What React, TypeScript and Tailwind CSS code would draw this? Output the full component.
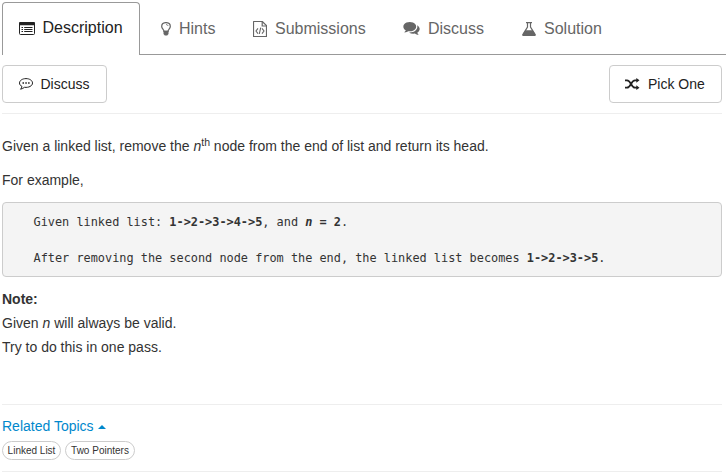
import type { ReactNode } from "react";

function ListIcon() {
  return (
    <svg width="16" height="13" viewBox="0 0 16 13" fill="none" stroke="currentColor">
      <rect x="0.5" y="0.5" width="15" height="12" rx="1" />
      <path d="M0 1.2Q0 0 1.2 0H14.8Q16 0 16 1.2V3.3H0Z" fill="currentColor" stroke="none" />
      <path d="M2.5 5.5H4M5.2 5.5H13.5M2.5 7.5H4M5.2 7.5H13.5M2.5 9.5H4M5.2 9.5H13.5" />
    </svg>
  );
}

function BulbIcon() {
  return (
    <svg width="10" height="14" viewBox="0 0 10 14" fill="none" stroke="currentColor" strokeWidth="1.25">
      <path d="M3 9.3C3 7.4.7 6.6.7 4.4C.7 2.1 2.6.6 5 .6S9.3 2.1 9.3 4.4C9.3 6.6 7 7.4 7 9.3Z" />
      <path d="M5 2.5Q6.7 2.5 7.2 4" strokeWidth=".8" />
      <path d="M2.5 8.8H7.5V12L6.2 13.5H3.8L2.5 12Z" fill="currentColor" stroke="none" />
    </svg>
  );
}

function CodeFileIcon() {
  return (
    <svg width="14" height="16" viewBox="0 0 14 16" fill="none" stroke="currentColor">
      <path d="M1 .5H9.3L13.5 4.7V15.5H.5V1Q.5.5 1 .5Z" strokeWidth="1.2" />
      <path d="M9.2.5V5H13.5" strokeWidth="1.2" />
      <path d="M5 7.3L3 10L5 12.7M9 7.3L11 10L9 12.7M7.7 6.7L6.3 13" strokeWidth="1.1" />
    </svg>
  );
}

function CommentsIcon() {
  return (
    <svg width="17" height="14" viewBox="0 0 1792 1536" fill="currentColor">
      <path d="M1408 640q0 139-94 257t-256.500 186.500-353.500 68.500q-86 0-176-16-124 88-278 128-36 9-86 16h-3q-11 0-20.500-8t-11.500-21q-1-3-1-6.500t.5-6.500 2-6l2.500-5 3.500-5.500 4-5 4.500-5 4-4.500q5-6 23-25t26-29.500 22.500-29 25-38.500 20.500-44q-124-72-195-177t-71-224q0-139 94-257t256.500-186.500 353.500-68.500 353.500 68.500 256.500 186.500 94 257zm384 256q0 120-71 224.500t-195 176.500q10 24 20.500 44t25 38.500 22.500 29 26 29.500 23 25q1 1 4 4.500t4.500 5 4 5 3.500 5.500l2.500 5 2 6 .5 6.500-1 6.500q-3 14-13 22t-22 7q-50-7-86-16-154-40-278-128-90 16-176 16-271 0-472-132 58 4 88 4 161 0 309-45t264-129q125-92 192-212t67-254q0-77-23-152 129 71 204 178t75 230z" transform="translate(0 -128)" />
    </svg>
  );
}

function FlaskIcon() {
  return (
    <svg width="14" height="14" viewBox="0 0 14 14" fill="none" stroke="currentColor">
      <path d="M4 .6H10M5.500 .6V5L1 12.400Q.5 13.400 1.600 13.400H12.400Q13.500 13.400 13 12.400L8.500 5V.6" strokeWidth="1.2" />
      <path d="M3.200 8.200H10.800L13.300 12.300Q13.800 13.500 12.500 13.500H1.500Q.2 13.500.7 12.300Z" fill="currentColor" stroke="none" />
    </svg>
  );
}

function CommentDotsIcon() {
  return (
    <svg width="14" height="12" viewBox="0 0 14 12" fill="none" stroke="currentColor">
      <path d="M7 .6C3.400.600.5 2.500.5 5C.5 6.500 1.500 7.700 3 8.500C2.900 9.700 2.300 10.500 1.500 11.200C3.100 10.900 4.400 10.200 5.500 9.300C9.700 9.800 13.500 8 13.500 5C13.500 2.500 10.600.6 7 .6Z" />
      <path d="M3.500 5H5M6.300 5H7.800M9.100 5H10.600" strokeWidth="1.6" />
    </svg>
  );
}

function ShuffleIcon() {
  return (
    <svg width="15" height="12" viewBox="0 0 15 12" fill="none" stroke="currentColor" strokeWidth="1.700">
      <path d="M0 2.300H2C6 2.300 6 9.700 10 9.700H12M0 9.700H2C6 9.700 6 2.300 10 2.300H12" />
      <path d="M11.300 0L14.500 2.300L11.300 4.800ZM11.300 7.200L14.500 9.700L11.300 12Z" fill="currentColor" stroke="none" />
    </svg>
  );
}

function Tab({ icon, children }: { icon: ReactNode; children: ReactNode }) {
  return (
    <div className="flex h-[53px] items-center gap-2 border-b border-[#999] pt-[1px] text-[#666]">
      {icon}
      <span>{children}</span>
    </div>
  );
}

export default function App() {
  return (
    <main className="h-[475px] overflow-hidden bg-white pt-[2px] pl-[2px] font-['Liberation_Sans',Arial,sans-serif] text-sm text-[#333]">
      <nav className="flex text-base">
        <div className="flex h-[53px] w-[138px] shrink-0 items-center gap-2 rounded-t border border-b-0 border-[#999] pb-[2px] pl-[15.5px] text-[#222]">
          <ListIcon />
          <span>Description</span>
        </div>
        <div className="flex flex-1 [&>div]:shrink-0">
          <div className="w-[113px] [&>div]:pl-[21px]"><Tab icon={<BulbIcon />}>Hints</Tab></div>
          <div className="w-[150px]"><Tab icon={<CodeFileIcon />}>Submissions</Tab></div>
          <div className="w-[119px]"><Tab icon={<CommentsIcon />}>Discuss</Tab></div>
          <div className="w-[204px]"><Tab icon={<FlaskIcon />}>Solution</Tab></div>
        </div>
      </nav>

      <div className="mr-[4px] flex justify-between border-b border-[#eee] pt-[10px] pb-[10px] text-[#222]">
        <button className="flex h-[38px] w-[105px] items-center gap-2 rounded border border-[#ccc] pl-[15.5px]">
          <CommentDotsIcon />
          <span>Discuss</span>
        </button>
        <button className="flex h-[38px] w-[113px] items-center gap-2 rounded border border-[#ccc] pl-[15px]">
          <ShuffleIcon />
          <span>Pick One</span>
        </button>
      </div>

      <article className="mr-[4px] leading-6">
        <p className="mt-5 h-6">
          Given a linked list, remove the <i>n</i><sup className="text-[75%]">th</sup> node from the end of list and return its head.
        </p>
        <p className="mt-[10px]">For example,</p>
        <div className="mt-[10px] flex h-[75px] flex-col gap-[18px] rounded border border-[#ccc] bg-[#f4f4f4] pt-[10px] pl-[30.5px] font-['DejaVu_Sans_Mono',monospace] text-[11.88px] leading-[18px] whitespace-pre">
          <p>{"Given linked list: "}<b>{"1->2->3->4->5"}</b>{", and "}<b><i>n</i>{" = 2"}</b>.</p>
          <p>{"After removing the second node from the end, the linked list becomes "}<b>{"1->2->3->5"}</b>.</p>
        </div>
        <p className="mt-[10px]">
          <b>Note:</b><br />
          Given <i>n</i> will always be valid.<br />
          Try to do this in one pass.
        </p>
      </article>

      <section className="mt-[45px] mr-[4px] border-y border-[#eee] pt-[10px] pb-[11px]">
        <h2 className="flex h-[23px] items-center gap-1 pb-[2px] text-[#0088cc]">
          Related Topics
          <span className="mt-[2px] border-x-[4px] border-b-[4px] border-x-transparent border-b-[#0088cc]" />
        </h2>
        <div className="mt-[3px] flex gap-1 text-[10px] text-[#333]">
          <span className="flex h-[19px] w-[59px] items-center justify-center rounded-full border border-[#ccc] pt-[1px]">Linked List</span>
          <span className="flex h-[19px] w-[70px] items-center justify-center rounded-full border border-[#ccc] pt-[1px]">Two Pointers</span>
        </div>
      </section>
    </main>
  );
}
